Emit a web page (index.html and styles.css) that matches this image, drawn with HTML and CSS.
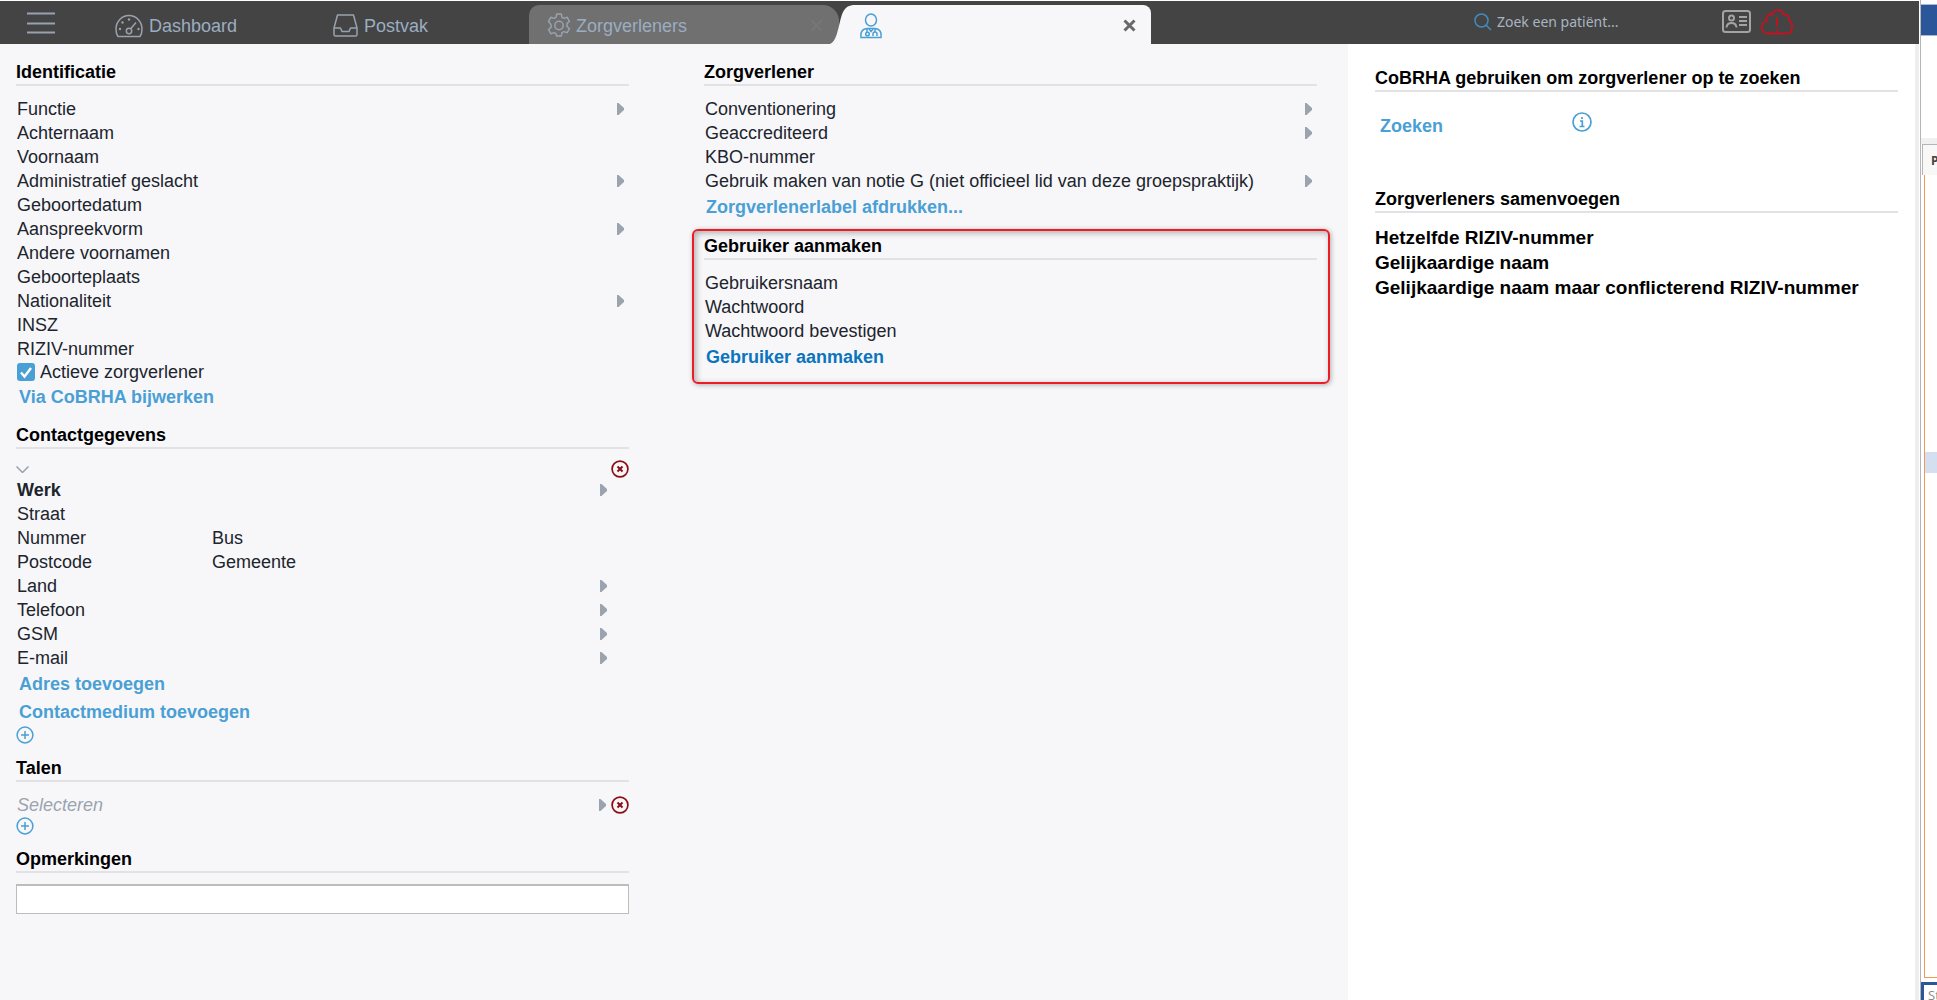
FILE: index.html
```html
<!DOCTYPE html>
<html lang="nl">
<head>
<meta charset="utf-8">
<title>Zorgverlener</title>
<link rel="stylesheet" href="styles.css">
</head>
<body>
<svg class="defs" aria-hidden="true">
  <symbol id="arrow" viewBox="0 0 7 12"><path d="M0 0H1.500L7 5V7L1.500 12H0Z" fill="#9ba4ae"/></symbol>
  <symbol id="remove" viewBox="0 0 18 18"><circle cx="9" cy="9" r="7.900" fill="none" stroke="#8b0d12" stroke-width="1.700"/><path d="M6.500 6.500l5 5M11.500 6.500l-5 5" stroke="#8b0d12" stroke-width="2"/></symbol>
  <symbol id="add" viewBox="0 0 18 18"><circle cx="9" cy="9" r="7.900" fill="none" stroke="#4a9fd4" stroke-width="1.500"/><path d="M9 5v8M5 9h8" stroke="#4a9fd4" stroke-width="1.500"/></symbol>
</svg>
<div class="desktop">
  <div class="app">
    <header class="topbar">
      <button class="menu" aria-label="Menu"><svg width="28" height="22" viewBox="0 0 28 22"><path d="M0 1.500h28M0 11.500h28M0 20.500h28" stroke="#98a2ae" stroke-width="2"/></svg></button>
      <nav class="nav">
        <a class="nav-item dashboard" href="#dashboard">
          <svg width="28" height="24" viewBox="0 0 28 24" fill="none" stroke="#98a2ae" stroke-width="1.500"><path d="M3 22.500Q1 20 1 15A13 13.500 0 0 1 27 15Q27 20 25 22.500Z"/><circle cx="14" cy="17" r="2.700"/><path d="M15.700 14.800L21 8.500"/><g fill="#98a2ae" stroke="none"><circle cx="5" cy="15" r="1.200"/><circle cx="7.500" cy="8.500" r="1.200"/><circle cx="14" cy="5.500" r="1.200"/><circle cx="23.500" cy="15" r="1.200"/></g></svg>
          Dashboard</a>
        <a class="nav-item" href="#postvak">
          <svg width="25" height="23" viewBox="0 0 25 23" fill="none" stroke="#98a2ae" stroke-width="1.500" stroke-linejoin="round"><path d="M4.500 1h16L24 14v6.500Q24 22 22.500 22h-20Q1 22 1 20.500V14Z"/><path d="M1 14h6.500l1.500 3.500h7l1.500-3.500H24"/></svg>
          Postvak</a>
      </nav>
      <div class="tabs">
        <div class="tab">
          <svg width="24" height="25" viewBox="0 0 24 25" fill="none" stroke="#98a2ae" stroke-width="1.500" stroke-linejoin="round"><path d="M9.700 1h4.600l.7 3.300 2 1.100 3.200-1.100 2.300 4-2.500 2.300v2.800l2.500 2.300-2.300 4-3.200-1.100-2 1.100-.7 3.300H9.700L9 20.700l-2-1.100-3.200 1.100-2.300-4L4 14.400v-2.800L1.500 8.300l2.300-4L7 5.400l2-1.100Z"/><circle cx="12" cy="12.500" r="4.200"/></svg>
          <a href="#zorgverleners">Zorgverleners</a>
          <button class="close dim" aria-label="Tabblad sluiten"><svg width="13" height="13" viewBox="0 0 13 13"><path d="M1.500 1.500l10 10M11.500 1.500l-10 10" stroke="#7b7e81" stroke-width="2"/></svg></button>
        </div>
        <div class="tab-active">
          <svg class="edge" width="25" height="39" viewBox="0 0 25 39"><path d="M0 39C6 36 7 28 9 21C12 9 13 0 25 0V39Z" fill="#f7f7fa"/></svg>
          <div class="tab-face">
            <svg width="22" height="26" viewBox="0 0 22 26" fill="none" stroke="#4a9fd4" stroke-width="1.500"><ellipse cx="11" cy="7" rx="5.500" ry="6"/><path d="M1 24.500Q0 16 7 15.500H15Q22 16 21 24.500Z"/><path d="M7 15.500v3.500M15 15.500v4M9 16l2 2.500L13 16M13 23v-2a2 2 0 0 1 4 0v2"/><circle cx="7.500" cy="21" r="1.800"/></svg>
            <button class="close" aria-label="Tabblad sluiten"><svg width="13" height="13" viewBox="0 0 13 13"><path d="M1.500 1.500l10 10M11.500 1.500l-10 10" stroke="#686868" stroke-width="3"/></svg></button>
          </div>
        </div>
      </div>
      <div class="tools">
        <label class="search">
          <svg width="18" height="18" viewBox="0 0 18 18" fill="none" stroke="#3f8dbf" stroke-width="1.500"><circle cx="7.500" cy="7.500" r="6.500"/><path d="M12 12l5 5"/></svg>
          <input type="search" placeholder="Zoek een patiënt..." aria-label="Zoek een patiënt">
        </label>
        <button class="tool" aria-label="eID lezen"><svg width="29" height="23" viewBox="0 0 29 23" fill="none" stroke="#a3a3a3" stroke-width="2"><rect x="1" y="1" width="27" height="21" rx="2.500"/><circle cx="9.500" cy="8" r="2.500"/><path d="M4.500 17.500Q5 13 9.500 13T14.500 17.500M17 7h8M17 11h8M17 15h8"/></svg></button>
        <button class="tool" aria-label="Verbindingsfout"><svg width="32" height="26" viewBox="0 0 32 26" fill="none" stroke="#c8101e" stroke-width="1.800"><path d="M7 24.500C-1 24.500-1 13 5.500 12C4 7 9 4 11 6C12 0 21-1 22.500 5.500C27 4.500 28 8 27.500 11C33 14 32 24.500 26 24.500Z"/><path d="M16 8.500v9M16 20v2.500"/></svg></button>
      </div>
    </header>

    <div class="content">
      <main class="form">
        <div class="column">
          <section>
            <h2>Identificatie</h2>
            <div class="field"><label for="functie">Functie</label><input id="functie"><button class="pick" aria-label="Functie kiezen"><svg><use href="#arrow"/></svg></button></div>
            <div class="field"><label for="achternaam">Achternaam</label><input id="achternaam"></div>
            <div class="field"><label for="voornaam">Voornaam</label><input id="voornaam"></div>
            <div class="field"><label for="geslacht">Administratief geslacht</label><input id="geslacht"><button class="pick" aria-label="Geslacht kiezen"><svg><use href="#arrow"/></svg></button></div>
            <div class="field"><label for="geboortedatum">Geboortedatum</label><input id="geboortedatum"></div>
            <div class="field"><label for="aanspreekvorm">Aanspreekvorm</label><input id="aanspreekvorm"><button class="pick" aria-label="Aanspreekvorm kiezen"><svg><use href="#arrow"/></svg></button></div>
            <div class="field"><label for="voornamen">Andere voornamen</label><input id="voornamen"></div>
            <div class="field"><label for="geboorteplaats">Geboorteplaats</label><input id="geboorteplaats"></div>
            <div class="field"><label for="nationaliteit">Nationaliteit</label><input id="nationaliteit"><button class="pick" aria-label="Nationaliteit kiezen"><svg><use href="#arrow"/></svg></button></div>
            <div class="field"><label for="insz">INSZ</label><input id="insz"></div>
            <div class="field"><label for="riziv">RIZIV-nummer</label><input id="riziv"></div>
            <div class="check"><input type="checkbox" id="actief" checked><label for="actief">Actieve zorgverlener</label></div>
            <button class="action">Via CoBRHA bijwerken</button>
          </section>

          <section>
            <h2>Contactgegevens</h2>
            <div class="line">
              <button class="icon" aria-label="Inklappen"><svg class="chevron" viewBox="0 0 13 7"><path d="M.5.5l6 6 6-6" fill="none" stroke="#98a2ae" stroke-width="1.500"/></svg></button>
              <button class="icon" aria-label="Adres verwijderen"><svg><use href="#remove"/></svg></button>
            </div>
            <div class="inset">
              <div class="field strong"><label for="werk">Werk</label><input id="werk"><button class="pick" aria-label="Type adres kiezen"><svg><use href="#arrow"/></svg></button></div>
              <div class="field"><label for="straat">Straat</label><input id="straat"></div>
              <div class="pair">
                <div class="field"><label for="nummer">Nummer</label><input id="nummer"></div>
                <div class="field"><label for="bus">Bus</label><input id="bus"></div>
              </div>
              <div class="pair">
                <div class="field"><label for="postcode">Postcode</label><input id="postcode"></div>
                <div class="field"><label for="gemeente">Gemeente</label><input id="gemeente"></div>
              </div>
              <div class="field"><label for="land">Land</label><input id="land"><button class="pick" aria-label="Land kiezen"><svg><use href="#arrow"/></svg></button></div>
              <div class="field"><label for="telefoon">Telefoon</label><input id="telefoon"><button class="pick" aria-label="Telefoon kiezen"><svg><use href="#arrow"/></svg></button></div>
              <div class="field"><label for="gsm">GSM</label><input id="gsm"><button class="pick" aria-label="GSM kiezen"><svg><use href="#arrow"/></svg></button></div>
              <div class="field"><label for="email">E-mail</label><input id="email"><button class="pick" aria-label="E-mail kiezen"><svg><use href="#arrow"/></svg></button></div>
            </div>
            <button class="action">Adres toevoegen</button>
            <button class="action">Contactmedium toevoegen</button>
            <button class="icon" aria-label="Toevoegen"><svg><use href="#add"/></svg></button>
          </section>

          <section>
            <h2>Talen</h2>
            <div class="language">
              <input type="text" placeholder="Selecteren" aria-label="Taal">
              <button class="pick" aria-label="Taal kiezen"><svg><use href="#arrow"/></svg></button>
              <button class="icon" aria-label="Taal verwijderen"><svg><use href="#remove"/></svg></button>
            </div>
            <button class="icon" aria-label="Taal toevoegen"><svg><use href="#add"/></svg></button>
          </section>

          <section>
            <h2><label for="opmerkingen">Opmerkingen</label></h2>
            <textarea id="opmerkingen" rows="1"></textarea>
          </section>
        </div>

        <div class="column">
          <section>
            <h2>Zorgverlener</h2>
            <div class="field"><label for="conventie">Conventionering</label><input id="conventie"><button class="pick" aria-label="Conventionering kiezen"><svg><use href="#arrow"/></svg></button></div>
            <div class="field"><label for="accreditatie">Geaccrediteerd</label><input id="accreditatie"><button class="pick" aria-label="Accreditatie kiezen"><svg><use href="#arrow"/></svg></button></div>
            <div class="field"><label for="kbo">KBO-nummer</label><input id="kbo"></div>
            <div class="field"><label for="notie">Gebruik maken van notie G (niet officieel lid van deze groepspraktijk)</label><input id="notie"><button class="pick" aria-label="Notie G kiezen"><svg><use href="#arrow"/></svg></button></div>
            <button class="action flush">Zorgverlenerlabel afdrukken...</button>
          </section>

          <section class="highlight">
            <h2>Gebruiker aanmaken</h2>
            <div class="field"><label for="gebruiker">Gebruikersnaam</label><input id="gebruiker"></div>
            <div class="field"><label for="wachtwoord">Wachtwoord</label><input id="wachtwoord" type="password"></div>
            <div class="field"><label for="bevestigen">Wachtwoord bevestigen</label><input id="bevestigen" type="password"></div>
            <button class="action flush primary">Gebruiker aanmaken</button>
          </section>
        </div>
      </main>

      <aside class="side">
        <section>
          <h2>CoBRHA gebruiken om zorgverlener op te zoeken</h2>
          <div class="lookup">
            <button class="action">Zoeken</button>
            <button class="icon info" aria-label="Informatie"><svg viewBox="0 0 20 20" fill="none" stroke="#4a9fd4" stroke-width="1.700"><circle cx="10" cy="10" r="9"/><path d="M10 5v2M8 9h2.300v5.500M7.500 14.500h5"/></svg></button>
          </div>
        </section>
        <section>
          <h2>Zorgverleners samenvoegen</h2>
          <ul class="matches">
            <li>Hetzelfde RIZIV-nummer</li>
            <li>Gelijkaardige naam</li>
            <li>Gelijkaardige naam maar conflicterend RIZIV-nummer</li>
          </ul>
        </section>
      </aside>
    </div>
  </div>

  <div class="behind">
    <div class="behind-title"></div>
    <div class="behind-ribbon"></div>
    <div class="behind-tab">P</div>
    <div class="behind-list"><div class="behind-row"></div></div>
    <div class="behind-task">St</div>
  </div>
</div>
</body>
</html>
```
FILE: styles.css
```css
* { box-sizing: border-box; }

body {
  margin: 0;
  background: #fff;
  color: #20242c;
  font: 18px/24px "Liberation Sans", Arial, sans-serif;
}

a { color: inherit; text-decoration: none; }

button {
  display: flex;
  align-items: center;
  padding: 0;
  border: 0;
  background: none;
  color: inherit;
  font: inherit;
  cursor: pointer;
}

input {
  min-width: 0;
  padding: 0;
  border: 0;
  background: none;
  color: inherit;
  font: inherit;
}

.defs { display: none; }

.desktop {
  display: flex;
  min-height: 100vh;
  overflow: hidden;
}

.app {
  display: flex;
  flex: 1;
  flex-direction: column;
  min-width: 0;
  padding-top: 1px;
}

/* Top bar */

.topbar {
  display: flex;
  align-items: stretch;
  height: 43px;
  background: #444;
  color: #9badc1;
}

.menu { width: 115px; padding-left: 27px; }

.nav { display: flex; width: 414px; }

.nav-item {
  display: flex;
  align-items: center;
  gap: 6px;
  padding-top: 6px;
}

.dashboard { width: 218px; }

.tabs {
  display: flex;
  width: 622px;
  padding-top: 4px;
}

.tab {
  display: flex;
  align-items: center;
  gap: 5px;
  width: 310px;
  padding: 2px 16px 0 18px;
  border-radius: 10px 16px 0 0;
  background: #707070;
}

.tab-active {
  display: flex;
  flex: 1;
  margin-left: -9px;
}

.tab-face {
  display: flex;
  flex: 1;
  align-items: center;
  padding: 2px 15px 0 5px;
  border-radius: 0 8px 0 0;
  background: #f7f7fa;
}

.close { margin-left: auto; }

.dim { opacity: 0.5; }

.tools {
  display: flex;
  align-items: center;
  gap: 10px;
  margin-left: auto;
  padding: 0 126px 2px 0;
}

.search {
  display: flex;
  align-items: center;
  gap: 5px;
  width: 238px;
}

.search input {
  flex: 1;
  font: 14px/20px "Noto Sans", sans-serif;
}

.search input::placeholder { color: #a9b4c0; opacity: 1; }

/* Page */

.content {
  display: grid;
  flex: 1;
  grid-template-columns: minmax(0, 1fr) 571px;
}

.form {
  display: grid;
  grid-template-columns: repeat(2, minmax(0, 1fr));
  gap: 75px;
  align-items: start;
  padding: 16px 31px 16px 16px;
  background: #f7f7fa;
}

.column {
  display: flex;
  flex-direction: column;
  gap: 12px;
}

h2 {
  margin: 0 0 11px;
  border-bottom: 2px solid #e2e2e5;
  color: #000;
  font-size: 18px;
  line-height: 24px;
}

.field {
  display: flex;
  align-items: center;
  height: 24px;
  padding: 0 5px 0 1px;
}

.field input { flex: 1; }

.strong { font-weight: bold; }

.pick svg { width: 7px; height: 12px; }

.check {
  display: flex;
  align-items: center;
  gap: 5px;
  height: 22px;
  padding-left: 1px;
}

.check input {
  width: 18px;
  height: 18px;
  margin: 0;
  border-radius: 3px;
  appearance: none;
  background: #4a9fd4 url("data:image/svg+xml,%3Csvg xmlns='http://www.w3.org/2000/svg' viewBox='0 0 18 18'%3E%3Cpath d='M4 9.500l3.500 4L14 5' fill='none' stroke='white' stroke-width='2.400'/%3E%3C/svg%3E");
}

.action {
  height: 28px;
  padding-left: 3px;
  color: #4a9fd4;
  font-weight: bold;
}

.flush { padding-left: 2px; }

.primary { color: #0b74bd; }

.icon svg { width: 18px; height: 18px; }

.icon .chevron { width: 13px; height: 7px; }

.line {
  display: flex;
  justify-content: space-between;
  height: 18px;
}

.inset { padding-right: 17px; }

.pair {
  display: grid;
  grid-template-columns: 195px 1fr;
}

.language {
  display: flex;
  align-items: center;
  gap: 5px;
  height: 24px;
  padding-left: 1px;
}

.language input { flex: 1; }

.language input::placeholder {
  color: #9ba4ae;
  font-style: italic;
  opacity: 1;
}

textarea {
  display: block;
  width: 100%;
  height: 30px;
  padding: 2px 4px;
  border: 1px solid #bdbdbd;
  border-top-width: 2px;
  border-radius: 0;
  background: #fff;
  font: inherit;
  resize: none;
}

.highlight {
  margin: -4px -13px 0 -12px;
  padding: 3px 11px 11px 10px;
  border: 2px solid #ed1c24;
  border-radius: 6px;
  box-shadow: 1px 1px 5px rgba(0, 0, 0, 0.3), inset 2px 2px 6px rgba(0, 0, 0, 0.3);
}

/* Right panel */

.side {
  display: flex;
  flex-direction: column;
  gap: 47px;
  padding: 22px 17px 16px 27px;
  border-right: 4px solid #eee;
}

.lookup {
  display: flex;
  justify-content: space-between;
  width: 217px;
  padding: 9px 0 0 2px;
}

.info { height: 20px; }

.info svg { width: 20px; height: 20px; }

.matches {
  margin: 0;
  padding: 1px 0 0;
  color: #000;
  font-size: 19px;
  font-weight: bold;
  line-height: 25px;
  list-style: none;
}

/* Window partly visible behind the application */

.behind {
  display: flex;
  flex-direction: column;
  width: 17px;
  margin-left: 1px;
  padding-top: 4px;
  border-left: 1px solid #b5b5b5;
  background: #fff;
}

.behind-title {
  height: 32px;
  border: solid #a8b8d4;
  border-width: 1px 0;
  background: #2b579a;
}

.behind-ribbon {
  height: 108px;
  border-bottom: 6px solid #f0f0f0;
}

.behind-tab {
  height: 31px;
  margin-left: 1px;
  padding-left: 8px;
  border: solid #b5b5b5;
  border-width: 1px 0 0 1px;
  background: #f8f8f8;
  color: #444;
  font: bold 12px/31px "Open Sans", sans-serif;
}

.behind-list {
  flex: 1;
  margin: 0 0 4px 3px;
  padding-top: 277px;
  border: solid #ee9b52;
  border-width: 0 0 1px 1px;
}

.behind-row { height: 21px; background: #d5dff2; }

.behind-task {
  height: 18px;
  overflow: hidden;
  padding-left: 4px;
  border: solid #2b579a;
  border-width: 3px 0 0 3px;
  color: #888;
  font: 13px/20px "Open Sans", sans-serif;
}
```
